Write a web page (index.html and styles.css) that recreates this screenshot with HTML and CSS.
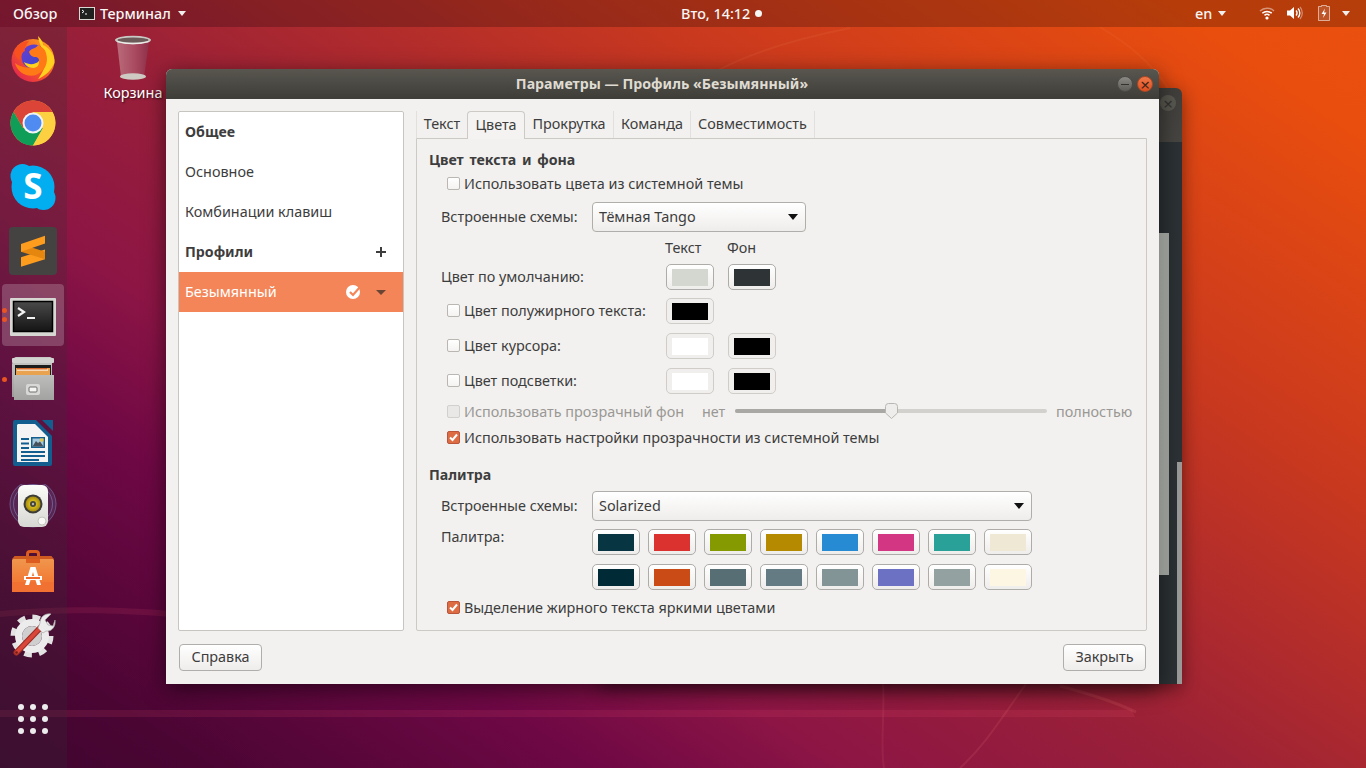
FILE: index.html
```html
<!DOCTYPE html>
<html lang="ru">
<head>
<meta charset="utf-8">
<title>Параметры — Профиль «Безымянный»</title>
<link rel="stylesheet" href="styles.css">
</head>
<body>
<div class="desktop">
  <svg class="streaks" width="1366" height="768" viewBox="0 0 1366 768" aria-hidden="true">
    <path d="M0 710H1132L1135 717H0Z" fill="#ff5a78" fill-opacity=".12"/>
    <path d="M0 611C60 606 110 606 170 611V617C110 612 60 612 0 617Z" fill="#ff5a78" fill-opacity=".11"/>
    <path d="M1060 686C1090 694 1115 702 1136 712" stroke="#ff8a80" stroke-opacity=".14" stroke-width="3" fill="none"/>
    <path d="M883 684C885 715 880 745 884 768" stroke="#ff8a80" stroke-opacity=".1" stroke-width="2" fill="none"/>
    <path d="M1026 684C1000 720 985 745 960 768" stroke="#ff8a80" stroke-opacity=".12" stroke-width="2" fill="none"/>
    <path d="M680 96C720 60 790 40 850 28" stroke="#ffb080" stroke-opacity=".08" stroke-width="2" fill="none"/>
    <path d="M1100 27C1130 45 1150 62 1168 88" stroke="#ffb080" stroke-opacity=".07" stroke-width="2" fill="none"/>
  </svg>

  <header class="topbar">
    <div class="top-left">
      <span class="top-item overview">Обзор</span>
      <svg class="top-term" width="16" height="13" viewBox="0 0 16 13"><rect x=".5" y=".5" width="15" height="12" fill="#20201f" stroke="#d8d8d4"/><path d="M3 3l2 1.500L3 6" stroke="#fff" fill="none"/><path d="M6 7h2" stroke="#fff"/></svg>
      <span class="top-item app-name">Терминал</span>
      <span class="tri-white"></span>
    </div>
    <div class="top-center"><span class="top-item">Вто, 14:12</span><span class="clock-dot"></span></div>
    <div class="top-right">
      <span class="top-item lang">en</span>
      <span class="tri-white"></span>
      <svg class="tray wifi" width="16" height="14" viewBox="0 0 16 14"><path d="M1 5a10 10 0 0 1 14 0" stroke="#fff" stroke-opacity=".45" stroke-width="1.500" fill="none"/><path d="M3.300 7.200a7 7 0 0 1 9.400 0" stroke="#fff" stroke-width="1.500" fill="none"/><path d="M5.500 9.400a3.600 3.600 0 0 1 5 0" stroke="#fff" stroke-width="1.500" fill="none"/><circle cx="8" cy="12" r="1.600" fill="#fff"/></svg>
      <svg class="tray vol" width="16" height="14" viewBox="0 0 16 14"><path d="M0 4.500h3L7 1v12L3 9.500H0Z" fill="#fff"/><path d="M9 4.500a3.500 3.500 0 0 1 0 5" stroke="#fff" stroke-width="1.400" fill="none"/><path d="M11 2.500a6.500 6.500 0 0 1 0 9" stroke="#fff" stroke-width="1.400" fill="none"/><path d="M13 1a9 9 0 0 1 0 12" stroke="#fff" stroke-opacity=".4" stroke-width="1.300" fill="none"/></svg>
      <svg class="tray bat" width="12" height="16" viewBox="0 0 12 16"><path d="M3.500 1.500V.5h5v1h3v14h-11v-14Z" fill="#fff" fill-opacity=".12" stroke="#fff" stroke-opacity=".55"/><path d="M7 3.500L3.500 9H6l-1 4 3.500-5.500H6Z" fill="#fff"/></svg>
      <span class="tri-white tri-last"></span>
    </div>
  </header>

  <nav class="dock">
    <div class="dock-item">
      <svg width="46" height="46" viewBox="0 0 46 46">
        <defs>
          <linearGradient id="ffa" x1="0" y1="1" x2="1" y2="0"><stop offset="0" stop-color="#e0195c"/><stop offset=".45" stop-color="#f4532a"/><stop offset="1" stop-color="#ffb01f"/></linearGradient>
          <linearGradient id="ffb" x1="0" y1="0" x2="1" y2="1"><stop offset="0" stop-color="#6d3bd0"/><stop offset="1" stop-color="#2b4fcb"/></linearGradient>
        </defs>
        <circle cx="23" cy="24.500" r="21.500" fill="url(#ffa)"/>
        <circle cx="24" cy="21" r="12.500" fill="url(#ffb)"/>
        <path d="M28 0C31 3 33 6 33 9 40 12 45 19 44.500 27 41 34 37 39 28 43 34 35 37 27 35 20 33 14 29 8 28 0Z" fill="#ffd01f"/>
        <path d="M36 17C39 27 35 35 26 39 17 42 7 36 5 27 11 32 21 33 26 29 30 26 30 22 26 21 22 21 20 19 19 16 21 12 26 13 28 9 32 11 35 13 36 17Z" fill="#ff7a16"/>
        <path d="M24 32C18 32 15 29 14 26 19 29 25 29 29 25 29 29 28 31 24 32Z" fill="#ffd21f"/>
        <path d="M5 15C7 9 13 5 19 5 16 9 14 12 15 15 12 16 11 20 10 24 6 22 4 18 5 15Z" fill="#f9501f"/>
      </svg>
    </div>
    <div class="dock-item">
      <svg width="46" height="46" viewBox="0 0 46 46">
        <circle cx="23" cy="23" r="22.500" fill="#fbc02d"/>
        <path d="M23 .5A22.500 22.500 0 0 0 3.500 11.750L13 28 23 12H42.500A22.500 22.500 0 0 0 23 .5Z" fill="#db4437"/>
        <path d="M3.500 11.750A22.500 22.500 0 0 0 23 45.500L33 28H13Z" fill="#0f9d58"/>
        <path d="M23 45.500A22.500 22.500 0 0 0 42.500 12H23L33 28Z" fill="#fdd042"/>
        <circle cx="23" cy="23" r="10.500" fill="#f3f3f3"/>
        <circle cx="23" cy="23" r="8.500" fill="#4f8bf0"/>
      </svg>
    </div>
    <div class="dock-item">
      <svg class="skype" width="46" height="46" viewBox="0 0 46 46">
        <circle cx="23" cy="23" r="21.500" fill="#02aef0"/>
        <circle cx="12.500" cy="12" r="12" fill="#02aef0"/>
        <circle cx="33.500" cy="34" r="12" fill="#02aef0"/>
        <text x="23" y="35" class="skype-s">S</text>
      </svg>
    </div>
    <div class="dock-item">
      <svg width="48" height="48" viewBox="0 0 48 48">
        <rect width="48" height="48" rx="4" fill="#444342"/>
        <path d="M36 22.500L12 30.300V39.700L36 32.300Z" fill="#fd9c1d"/>
        <path d="M12 17L36 24.700V32.300L12 24.700Z" fill="#e5860f"/>
        <path d="M36 8.700L12 17V24.700L36 16.500Z" fill="#fd9c1d"/>
      </svg>
    </div>
    <div class="dock-item active">
      <span class="run-dots"><i></i><i></i></span>
      <svg width="46" height="38" viewBox="0 0 46 38">
        <defs><linearGradient id="tm" x1="0" y1="0" x2="0" y2="1"><stop offset="0" stop-color="#4a4a4a"/><stop offset="1" stop-color="#141414"/></linearGradient></defs>
        <rect x="0" y="0" width="46" height="38" rx="1" fill="#d6d6d2"/>
        <rect x="3.500" y="3.500" width="39" height="30" fill="url(#tm)" stroke="#000" stroke-width="1.500"/>
        <path d="M8 10l6 4-6 4" stroke="#f2f2f2" stroke-width="2.200" fill="none"/>
        <path d="M17 20h8" stroke="#f2f2f2" stroke-width="2"/>
      </svg>
    </div>
    <div class="dock-item">
      <span class="run-dots"><i></i></span>
      <svg width="44" height="44" viewBox="0 0 44 44">
        <defs>
          <linearGradient id="fc" x1="0" y1="0" x2="0" y2="1"><stop offset="0" stop-color="#c9c9c7"/><stop offset="1" stop-color="#9c9c9a"/></linearGradient>
          <linearGradient id="fd" x1="0" y1="0" x2="0" y2="1"><stop offset="0" stop-color="#bdbdbb"/><stop offset="1" stop-color="#a2a2a0"/></linearGradient>
        </defs>
        <path d="M3 2Q3 0 5 0H39Q41 0 41 2V40H1V7Z" fill="url(#fc)"/>
        <rect x="1" y="1" width="42" height="5" rx="1" fill="#d2d2d0"/>
        <rect x="4" y="8" width="36" height="11" fill="#1c1c1c"/>
        <rect x="5" y="11" width="34" height="10" fill="#e9a24f"/>
        <path d="M6 13h31" stroke="#fff" stroke-width="1.200"/>
        <rect x="6" y="11" width="30" height="1.400" fill="#d9682c"/>
        <path d="M3 18H43V43H3Z" fill="url(#fd)"/>
        <rect x="15" y="27" width="14" height="11" rx="2" fill="#d8d8d6"/>
        <rect x="18" y="30" width="8" height="5" rx="1" fill="#f5f5f3" stroke="#6e6e6c"/>
      </svg>
    </div>
    <div class="dock-item">
      <svg width="42" height="50" viewBox="0 0 42 50">
        <path d="M3 2H24L40 18V46Q40 48 38 48H3Q1 48 1 46V4Q1 2 3 2Z" fill="#115e8f"/>
        <path d="M30 2H41V13Z" fill="#115e8f"/>
        <path d="M6 6H23L36 19V44H5V7Z" fill="#f4f4f4"/>
        <g fill="#125e8f"><rect x="9" y="20" width="8" height="2"/><rect x="9" y="24.500" width="8" height="2"/><rect x="9" y="29" width="8" height="2"/><rect x="9" y="33" width="24" height="2"/><rect x="9" y="37" width="24" height="2"/><rect x="9" y="41" width="18" height="2"/></g>
        <rect x="19" y="19" width="14" height="11" fill="#125e8f"/>
        <rect x="20.500" y="20.500" width="11" height="8" fill="#a6c8da"/>
        <path d="M20.500 28.500L24 23l2 2 2-1.500 3.500 5Z" fill="#45505a"/>
        <rect x="28" y="20.500" width="3.500" height="3" fill="#e3c64a"/>
      </svg>
    </div>
    <div class="dock-item">
      <svg width="48" height="46" viewBox="0 0 48 46">
        <defs>
          <linearGradient id="rb" x1="0" y1="0" x2="0" y2="1"><stop offset="0" stop-color="#fbfbf9"/><stop offset="1" stop-color="#d7d8d3"/></linearGradient>
          <radialGradient id="rg"><stop offset=".25" stop-color="#e8cc20"/><stop offset="1" stop-color="#a58c10"/></radialGradient>
        </defs>
        <circle cx="24" cy="20" r="23.500" fill="#6f8fd4" fill-opacity=".16"/>
        <circle cx="24" cy="20" r="23" fill="none" stroke="#8fa6e0" stroke-opacity=".35"/>
        <circle cx="24" cy="20" r="19.500" fill="none" stroke="#8fa6e0" stroke-opacity=".45"/>
        <rect x="9" y="1" width="30" height="42" rx="6" fill="url(#rb)"/>
        <circle cx="24" cy="20" r="9.500" fill="#3c3c38"/>
        <circle cx="24" cy="20" r="7.500" fill="url(#rg)"/>
        <circle cx="24" cy="20" r="3" fill="#45443c"/>
        <circle cx="24" cy="20" r="1.200" fill="#b8b8b0"/>
        <circle cx="33" cy="37" r="4" fill="#f8f8f6" stroke="#c5c5c0"/>
      </svg>
    </div>
    <div class="dock-item">
      <svg width="42" height="44" viewBox="0 0 42 44">
        <defs><linearGradient id="sw" x1="0" y1="0" x2="0" y2="1"><stop offset="0" stop-color="#f09a50"/><stop offset="1" stop-color="#f26d2a"/></linearGradient></defs>
        <path d="M14 14V5Q14 1 18 1H24Q28 1 28 5V14H25V5Q25 4 24 4H18Q17 4 17 5V14Z" fill="#dd5c20"/>
        <path d="M3 7H39L42 11V43H0V11Z" fill="url(#sw)"/>
        <path d="M0 10L3 7H39L42 10Z" fill="#cf5a20"/>
        <rect y="33" width="42" height="10" fill="#f07132"/>
        <path d="M14 10H28V14H14Z" fill="#dd5c20"/>
        <path d="M18.500 18H23.500L29 36H25L21 23 17 36H13Z" fill="#fff"/>
        <rect x="12" y="27" width="18" height="4" fill="#fff"/>
        <rect x="14" y="28" width="14" height="2" fill="#ee6a2c"/>
      </svg>
    </div>
    <div class="dock-item">
      <svg width="46" height="46" viewBox="0 0 46 46">
        <circle cx="22" cy="24" r="18.500" fill="none" stroke="#e2e2e2" stroke-width="6" stroke-dasharray="7.500 7"/>
        <circle cx="22" cy="24" r="13.500" fill="none" stroke="#ececec" stroke-width="7"/>
        <circle cx="22" cy="24" r="10" fill="#cfcfcf"/>
        <path d="M6.500 40.500L33 13" stroke="#a02b22" stroke-width="6" stroke-linecap="round"/>
        <path d="M6.500 40.500L33 13" stroke="#d8473a" stroke-width="3.800" stroke-linecap="round"/>
        <circle cx="6.500" cy="40.500" r="1.300" fill="#6e1c16"/>
        <path d="M30 11C30 5 35 1 41 2L35 8 38 13 43 14 45 8C46 14 42 20 36 19L33 21 28 16Z" fill="#ececec" stroke="#a9a9a9" stroke-width=".7"/>
      </svg>
    </div>
    <div class="apps-grid"><i></i><i></i><i></i><i></i><i></i><i></i><i></i><i></i><i></i></div>
  </nav>

  <div class="desk-icon">
    <svg width="38" height="46" viewBox="0 0 38 46">
      <defs><linearGradient id="tr" x1="0" y1="0" x2="1" y2="0"><stop offset="0" stop-color="#b96b7a"/><stop offset=".6" stop-color="#a8485f"/><stop offset="1" stop-color="#8e3049"/></linearGradient></defs>
      <path d="M3 7L7 42Q14 46 30 42L35 7Z" fill="url(#tr)"/>
      <ellipse cx="19" cy="41.500" rx="13" ry="3.200" fill="#cfc9c4"/>
      <ellipse cx="19" cy="5" rx="18" ry="4.300" fill="#c9c9c5"/>
      <ellipse cx="19" cy="5" rx="15.500" ry="2.600" fill="#6c5b58"/>
      <path d="M3.500 6.500Q19 11 34.500 6.500" stroke="#f2f1ee" stroke-width="1.200" fill="none"/>
    </svg>
    <span class="desk-label">Корзина</span>
  </div>

  <div class="window term-window">
    <div class="term-title"><span class="wm-btn wm-dim">×</span></div>
    <div class="term-body"><span class="term-thumb"></span><span class="term-scroll"></span></div>
  </div>

  <main class="window dialog">
    <div class="titlebar">
      <h1 class="title">Параметры — Профиль «Безымянный»</h1>
      <div class="wm-group">
        <span class="wm-btn wm-min"><i></i></span>
        <span class="wm-btn wm-close">×</span>
      </div>
    </div>
    <div class="dialog-body">
      <div class="dialog-main">
        <aside class="sidebar">
          <div class="side-row bold">Общее</div>
          <div class="side-row">Основное</div>
          <div class="side-row">Комбинации клавиш</div>
          <div class="side-row bold">Профили<span class="plus"></span></div>
          <div class="side-row selected">Безымянный
            <svg class="def-check" width="15" height="15" viewBox="0 0 15 15"><circle cx="7" cy="8" r="7" fill="#fff"/><path d="M4 8l3 3 7-8" stroke="#f48558" stroke-width="2.200" fill="none"/></svg>
            <span class="tri-dark"></span>
          </div>
        </aside>
        <section class="notebook">
          <div class="tabs">
            <span class="tab t1">Текст</span>
            <span class="tab t2 current">Цвета</span>
            <span class="tab t3">Прокрутка</span>
            <span class="tab t4">Команда</span>
            <span class="tab t5">Совместимость</span>
          </div>
          <div class="page">
            <h2 class="group first">Цвет текста и фона</h2>
            <label class="check-row gap4"><span class="check"></span>Использовать цвета из системной темы</label>
            <div class="combo-row gap8"><span class="combo-label">Встроенные схемы:</span><span class="combo short">Тёмная Tango<i class="tri-black"></i></span></div>
            <div class="color-row heads gap6"><span></span><span class="head">Текст</span><span class="head">Фон</span></div>
            <div class="color-row swatch-row gap6"><span class="plain">Цвет по умолчанию:</span>
              <span class="swatch"><i class="c-d3d7cf"></i></span><span class="swatch"><i class="c-2e3436"></i></span></div>
            <div class="color-row swatch-row gap8"><label class="inner-check"><span class="check"></span>Цвет полужирного текста:</label>
              <span class="swatch off"><i class="c-000"></i></span><span></span></div>
            <div class="color-row swatch-row gap9"><label class="inner-check"><span class="check"></span>Цвет курсора:</label>
              <span class="swatch off"><i class="c-fff"></i></span><span class="swatch off"><i class="c-000"></i></span></div>
            <div class="color-row swatch-row gap9"><label class="inner-check"><span class="check"></span>Цвет подсветки:</label>
              <span class="swatch off"><i class="c-fff"></i></span><span class="swatch off"><i class="c-000"></i></span></div>
            <div class="slider-row gap8">
              <span class="check disabled"></span>
              <span class="dim slider-text">Использовать прозрачный фон</span>
              <span class="dim slider-min">нет</span>
              <span class="slider"><span class="fill"></span>
                <svg class="thumb" width="13" height="16" viewBox="0 0 13 16"><path d="M.5 3.500Q.5.500 3.500.500h6q3 0 3 3V10L6.500 15.500.5 10Z" fill="#eeedeb" stroke="#b8b6b2"/></svg>
              </span>
              <span class="dim slider-max">полностью</span>
            </div>
            <label class="check-row gap6"><span class="check on"><svg width="13" height="13" viewBox="0 0 13 13"><path d="M3 6.500l2.500 2.500L10 3.500" stroke="#fff" stroke-width="2" fill="none"/></svg></span>Использовать настройки прозрачности из системной темы</label>
            <h2 class="group gap17">Палитра</h2>
            <div class="combo-row gap6"><span class="combo-label">Встроенные схемы:</span><span class="combo long">Solarized<i class="tri-black"></i></span></div>
            <div class="palette-row gap8">
              <span class="palette-label">Палитра:</span>
              <div class="palette">
                <span class="swatch"><i class="p1"></i></span><span class="swatch"><i class="p2"></i></span><span class="swatch"><i class="p3"></i></span><span class="swatch"><i class="p4"></i></span><span class="swatch"><i class="p5"></i></span><span class="swatch"><i class="p6"></i></span><span class="swatch"><i class="p7"></i></span><span class="swatch"><i class="p8"></i></span>
                <span class="swatch"><i class="p9"></i></span><span class="swatch"><i class="p10"></i></span><span class="swatch"><i class="p11"></i></span><span class="swatch"><i class="p12"></i></span><span class="swatch"><i class="p13"></i></span><span class="swatch"><i class="p14"></i></span><span class="swatch"><i class="p15"></i></span><span class="swatch"><i class="p16"></i></span>
              </div>
            </div>
            <label class="check-row gap8"><span class="check on"><svg width="13" height="13" viewBox="0 0 13 13"><path d="M3 6.500l2.500 2.500L10 3.500" stroke="#fff" stroke-width="2" fill="none"/></svg></span>Выделение жирного текста яркими цветами</label>
          </div>
        </section>
      </div>
      <div class="actions"><button class="btn">Справка</button><button class="btn">Закрыть</button></div>
    </div>
  </main>
</div>
</body>
</html>
```
FILE: styles.css
```css
* { box-sizing: border-box; }
html, body { margin: 0; padding: 0; }
body { font-family: "Noto Sans", "Open Sans", sans-serif; font-size: 14.4px; color: #3d3d3d; }
i { display: block; font-style: normal; }

.desktop {
  position: relative; width: 1366px; height: 768px; overflow: hidden;
  background: linear-gradient(34deg, #400530 0%, #4a0533 8%, #6f0845 24%, #8c1545 33.6%, #9a2038 47.7%, #c8381f 70%, #e94e0e 92%, #ea500f 100%);
}
.streaks { position: absolute; left: 0; top: 0; }

/* top bar */
.topbar {
  position: absolute; left: 0; top: 0; width: 1366px; height: 27px;
  display: flex; align-items: center; background: rgba(0,0,0,.22);
  color: #f6f6f4; font-weight: 500; padding-bottom: 1px;
}
.top-left { display: flex; align-items: center; width: 681px; padding-left: 13px; }
.top-item { white-space: nowrap; }
.overview { width: 66px; }
.top-term { margin-right: 5px; }
.app-name { width: 78px; }
.tri-white { width: 0; height: 0; border-left: 4.5px solid transparent; border-right: 4.5px solid transparent; border-top: 5px solid #f0efed; }
.top-center { display: flex; align-items: center; }
.clock-dot { width: 7px; height: 7px; border-radius: 50%; background: #f6f6f4; margin-left: 5px; }
.top-right { display: flex; align-items: center; margin-left: auto; padding-right: 16px; }
.lang { width: 23px; }
.wifi { margin-left: 33px; }
.vol { margin-left: 12px; }
.bat { margin-left: 15px; }
.tri-last { margin-left: 12px; }

/* dock */
.dock {
  position: absolute; left: 0; top: 27px; width: 67px; height: 741px;
  display: flex; flex-direction: column; align-items: center;
  background: rgba(52,50,52,.24);
}
.dock-item { position: relative; width: 62px; height: 64px; display: flex; align-items: center; justify-content: center; flex: none; margin-left: -1px; border-radius: 4px; }
.dock-item.active { background: rgba(255,255,255,.2); height: 62px; margin: 1px 0 1px -1px; padding-top: 4px; }
.run-dots { position: absolute; left: 0; top: 0; bottom: 0; display: flex; flex-direction: column; justify-content: center; gap: 4px; }
.run-dots i { width: 5px; height: 5px; border-radius: 50%; background: #e95420; }
.apps-grid { margin-top: 37px; margin-left: -1px; width: 30px; display: grid; grid-template-columns: repeat(3, 6px); gap: 6px; }
.apps-grid i { width: 6px; height: 6px; border-radius: 50%; background: #ececec; }
.skype { overflow: visible; }
.skype-s { font: 700 35px/1 "Open Sans", sans-serif; fill: #fff; text-anchor: middle; }

/* desktop icon */
.desk-icon { position: absolute; left: 94px; top: 35px; width: 78px; display: flex; flex-direction: column; align-items: center; }
.desk-label { color: #fff; margin-top: 2px; line-height: 20px; text-shadow: 1px 1px 2px rgba(0,0,0,.7); }

/* windows */
.window { position: absolute; border-radius: 6px 6px 0 0; }
.term-window { left: 600px; top: 88px; width: 582px; height: 596px; box-shadow: 0 4px 18px rgba(0,0,0,.45); overflow: hidden; }
.term-title { height: 54px; background: linear-gradient(#3f3e3b, #474541); display: flex; justify-content: flex-end; padding: 7px 6px 0 0; }
.term-body { position: relative; height: 542px; background: #2b3134; }
.term-thumb { position: absolute; right: 13px; top: 91px; width: 10px; height: 342px; background: linear-gradient(90deg, #c3c6bf, #a6aaa3); }
.term-scroll { position: absolute; right: 0; top: 320px; width: 5px; height: 222px; background: #9a9a98; }
.wm-btn { display: flex; align-items: center; justify-content: center; width: 16px; height: 16px; border-radius: 50%; font-size: 17px; line-height: 1; }
.wm-dim { background: #58574f; color: #33322f; }
.dialog { left: 166px; top: 69px; width: 993px; height: 615px; box-shadow: 0 5px 22px rgba(0,0,0,.55); background: #f2f1ef; overflow: hidden; }
.titlebar { position: relative; height: 30px; display: flex; align-items: center; justify-content: center; background: linear-gradient(#58564f, #3f3d38); }
.title { margin: 0; font-size: 14.2px; font-weight: 700; color: #dfdbd2; padding: 0 1px 2px 0; }
.wm-group { position: absolute; right: 6px; top: 7px; display: flex; gap: 4px; }
.wm-min { background: linear-gradient(#8b8a84, #5d5c56); border: 1px solid #4c4b45; }
.wm-min i { width: 8px; height: 1px; background: #33322f; }
.wm-close { background: linear-gradient(#f07748, #e04f20); color: #40251a; border: 1px solid #a84a25; }

.dialog-body { padding: 12px 12px 0 12px; }
.dialog-main { display: flex; gap: 12px; height: 520px; }
.sidebar { width: 226px; background: #fff; border: 1px solid #c8c5c1; border-radius: 2px; }
.side-row { position: relative; height: 40px; display: flex; align-items: center; padding: 0 0 2px 6px; white-space: nowrap; }
.side-row.bold { font-weight: 700; font-size: 14.2px; }
.side-row.selected { background: #f48558; color: #fff; }
.plus { position: absolute; left: 197px; top: 15px; width: 10px; height: 10px;
  background: linear-gradient(#3d3d3d,#3d3d3d) center/10px 2px no-repeat, linear-gradient(#3d3d3d,#3d3d3d) center/2px 10px no-repeat; }
.def-check { position: absolute; left: 167px; top: 12px; }
.tri-dark { position: absolute; left: 197px; top: 18px; width: 0; height: 0; border-left: 5px solid transparent; border-right: 5px solid transparent; border-top: 5px solid #6b4534; }

.notebook { width: 731px; display: flex; flex-direction: column; }
.tabs { display: flex; height: 27px; }
.tab { display: flex; align-items: center; justify-content: center; height: 27px; padding-bottom: 2px; white-space: nowrap; background: #f2f1ef; border-right: 1px solid #e2e0dc; }
.t1 { width: 51px; border-left: 1px solid #e2e0dc; border-right: 0; }
.t2 { width: 58px; }
.t3 { width: 89px; }
.t4 { width: 77px; }
.t5 { width: 124px; }
.tab.current { border: 1px solid #cdc9c5; border-bottom: 0; border-radius: 4px 4px 0 0; background: #f4f3f1; position: relative; z-index: 1; margin-bottom: -1px; height: 28px; padding-bottom: 3px; }
.page { height: 493px; border: 1px solid #cdc9c5; border-radius: 0 0 2px 2px; padding-left: 12px; }

.group { margin: 0; font-size: 14.2px; font-weight: 700; height: 20px; line-height: 19px; word-spacing: 2px; }
.first { margin-top: 11px; }
.gap4 { margin-top: 4px; }
.gap6 { margin-top: 6px; }
.gap8 { margin-top: 8px; }
.gap9 { margin-top: 9px; }
.gap17 { margin-top: 17px; }

.check-row, .inner-check { display: flex; align-items: center; height: 20px; gap: 4px; white-space: nowrap; padding: 0 0 2px 18px; }
.check { flex: none; width: 13px; height: 13px; border: 1px solid #bab7b2; border-radius: 2px; background: linear-gradient(#fff, #f4f3f1); display: block; }
.check.disabled { background: #e9e8e6; border-color: #d2d0cc; }
.check.on { background: #dd6c42; border-color: #b9553a; position: relative; }
.check.on svg { position: absolute; left: -1px; top: -1px; }

.combo-row { display: flex; align-items: center; height: 30px; padding-left: 12px; }
.combo-label { width: 151px; padding-bottom: 2px; }
.combo { display: flex; align-items: center; justify-content: space-between; height: 30px; padding: 0 7px 2px 6px; border: 1px solid #b0aeaa; border-radius: 4px; background: linear-gradient(#fff, #efedeb); }
.short { width: 214px; }
.long { width: 440px; }
.tri-black { width: 0; height: 0; border-left: 5px solid transparent; border-right: 5px solid transparent; border-top: 6px solid #111; margin-top: 2px; }

.color-row { display: grid; grid-template-columns: 223px 48px 48px; column-gap: 14px; align-items: center; }
.heads { height: 20px; padding-bottom: 2px; }
.head { margin-left: -1px; }
.swatch-row { height: 26px; }
.plain { padding: 0 0 2px 12px; }
.swatch { display: flex; align-items: center; justify-content: center; width: 48px; height: 26px; border: 1px solid #aeaca8; border-radius: 5px; background: linear-gradient(#fff, #efedeb); }
.swatch i { width: 36px; height: 17px; }
.swatch.off { background: #f0efed; border-color: #d0cdc9; }
.c-d3d7cf { background: #d3d7cf; }
.c-2e3436 { background: #2e3436; }
.c-000 { background: #000; }
.c-fff { background: #fff; }

.slider-row { display: flex; align-items: center; height: 20px; padding: 0 0 2px 18px; white-space: nowrap; }
.dim { color: #9a9895; }
.slider-row .check { margin-right: 4px; }
.slider-text { width: 238px; }
.slider-min { width: 33px; }
.slider { position: relative; width: 312px; height: 4px; border-radius: 2px; background: #d2d1ce; }
.fill { display: block; width: 156px; height: 4px; border-radius: 2px 0 0 2px; background: #a9a8a5; }
.thumb { position: absolute; left: 150px; top: -6px; }
.slider-max { margin-left: 9px; }

.palette-row { display: flex; padding-left: 12px; }
.palette-label { width: 151px; line-height: 16px; }
.palette { display: grid; grid-template-columns: repeat(8, 48px); gap: 9px 8px; }
.p1 { background: #073642; } .p2 { background: #dc322f; } .p3 { background: #859900; } .p4 { background: #b58900; }
.p5 { background: #268bd2; } .p6 { background: #d33682; } .p7 { background: #2aa198; } .p8 { background: #eee8d5; }
.p9 { background: #002b36; } .p10 { background: #cb4b16; } .p11 { background: #586e75; } .p12 { background: #657b83; }
.p13 { background: #839496; } .p14 { background: #6c71c4; } .p15 { background: #93a1a1; } .p16 { background: #fdf6e3; }

.actions { display: flex; justify-content: space-between; padding: 13px 1px 0 1px; }
.btn { width: 83px; height: 27px; padding: 0 0 2px; font: inherit; color: #3d3d3d; border: 1px solid #b0aeaa; border-radius: 4px; background: linear-gradient(#fff, #efedeb); }
```
